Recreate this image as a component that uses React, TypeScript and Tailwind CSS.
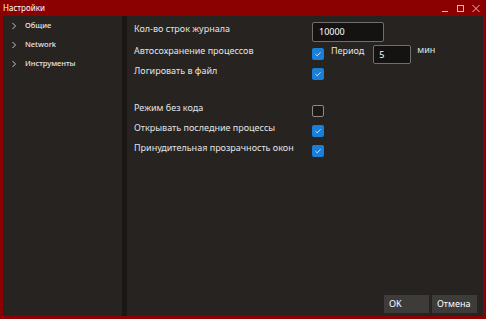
import { type ReactNode } from 'react';

const font = { fontFamily: '"Noto Sans", "DejaVu Sans", sans-serif' };

function Check({ checked }: { checked: boolean }) {
  if (!checked) {
    return <div className="mt-[4px] h-[12px] w-[12px] rounded-[2px] border border-[#8a8a8a] bg-[#1c1a19]" />;
  }
  return (
    <div className="mt-[4px] flex h-[12px] w-[12px] items-center justify-center rounded-[2px] bg-[#1a7fd8]">
      <svg width="8" height="8" viewBox="0 0 8 8" fill="none">
        <path d="M1.5 4.2 L3.2 5.8 L6.6 2.3" stroke="#dbeeff" strokeWidth="0.9" />
      </svg>
    </div>
  );
}

function Row({ label, children }: { label: string; children: ReactNode }) {
  return (
    <div className="flex h-[20px] items-start">
      <div className="w-[178px] text-[9px] leading-[14px] text-[#e4e4e4]">{label}</div>
      <div className="flex items-start">{children}</div>
    </div>
  );
}

function NavItem({ label }: { label: string }) {
  return (
    <div className="flex h-[19px] items-center pl-[8px] text-[7.5px] font-medium text-[#e8e8e8]">
      <svg width="6" height="8" viewBox="0 0 6 8" fill="none" className="mr-[8px]">
        <path d="M1.5 1 L4.5 4 L1.5 7" stroke="#d8d8d8" strokeWidth="0.9" />
      </svg>
      {label}
    </div>
  );
}

export default function App() {
  return (
    <div className="flex h-[319px] w-[486px] flex-col bg-[#8b0000]" style={font}>
      {/* заголовок окна */}
      <div className="flex h-[16px] items-center justify-between pl-[3px] pr-[6px]">
        <span className="text-[8px] text-white">Настройки</span>
        <div className="flex items-center gap-[8px]">
          <svg width="7" height="8" viewBox="0 0 7 8">
            <path d="M0 7.5 H6" stroke="#e8b4b4" strokeWidth="1" />
          </svg>
          <svg width="7" height="7" viewBox="0 0 7 7">
            <rect x="0.5" y="0.5" width="6" height="6" stroke="#e8b4b4" fill="none" strokeWidth="1" />
          </svg>
          <svg width="8" height="7" viewBox="0 0 8 7">
            <path d="M0.5 0 L7.5 7 M7.5 0 L0.5 7" stroke="#e8b4b4" strokeWidth="1" />
          </svg>
        </div>
      </div>

      <div className="mx-[3px] mb-[3px] flex flex-1 bg-[#262321]">
        {/* меню */}
        <div className="w-[119px]">
          <NavItem label="Общие" />
          <NavItem label="Network" />
          <NavItem label="Инструменты" />
        </div>
        <div className="w-[5px] bg-[#191817]" />

        {/* настройки */}
        <div className="flex flex-1 flex-col pl-[7px] pt-[6px]">
          <div className="flex h-[22px] items-start">
            <div className="w-[178px] text-[9px] leading-[14px] text-[#e4e4e4]">Кол-во строк журнала</div>
            <div className="flex h-[20px] w-[72px] items-center rounded-[2px] border border-[#6e6e6e] bg-[#141312] pl-[6px] text-[9px] text-white">
              10000
            </div>
          </div>
          <Row label="Автосохранение процессов">
            <Check checked />
            <span className="ml-[7px] mr-[9px] text-[9px] leading-[14px] text-[#e4e4e4]">Период</span>
            <div className="mt-[1px] flex h-[19px] w-[38px] items-center rounded-[2px] border border-[#6e6e6e] bg-[#141312] pl-[5px] text-[9px] text-white">
              5
            </div>
            <span className="ml-[6px] text-[9px] leading-[12px] text-[#e4e4e4]">мин</span>
          </Row>
          <Row label="Логировать в файл">
            <Check checked />
          </Row>
          <div className="h-[17px]" />
          <Row label="Режим без кода">
            <Check checked={false} />
          </Row>
          <Row label="Открывать последние процессы">
            <Check checked />
          </Row>
          <Row label="Принудительная прозрачность окон">
            <Check checked />
          </Row>

          <div className="mb-[3px] mr-[6px] mt-auto flex justify-end gap-[3px]">
            <button className="h-[18px] w-[45px] bg-[#3d3c3b] pl-[5px] text-left text-[9px] text-white">OK</button>
            <button className="h-[18px] w-[45px] bg-[#3d3c3b] pl-[5px] text-left text-[9px] text-white">Отмена</button>
          </div>
        </div>
      </div>
    </div>
  );
}
